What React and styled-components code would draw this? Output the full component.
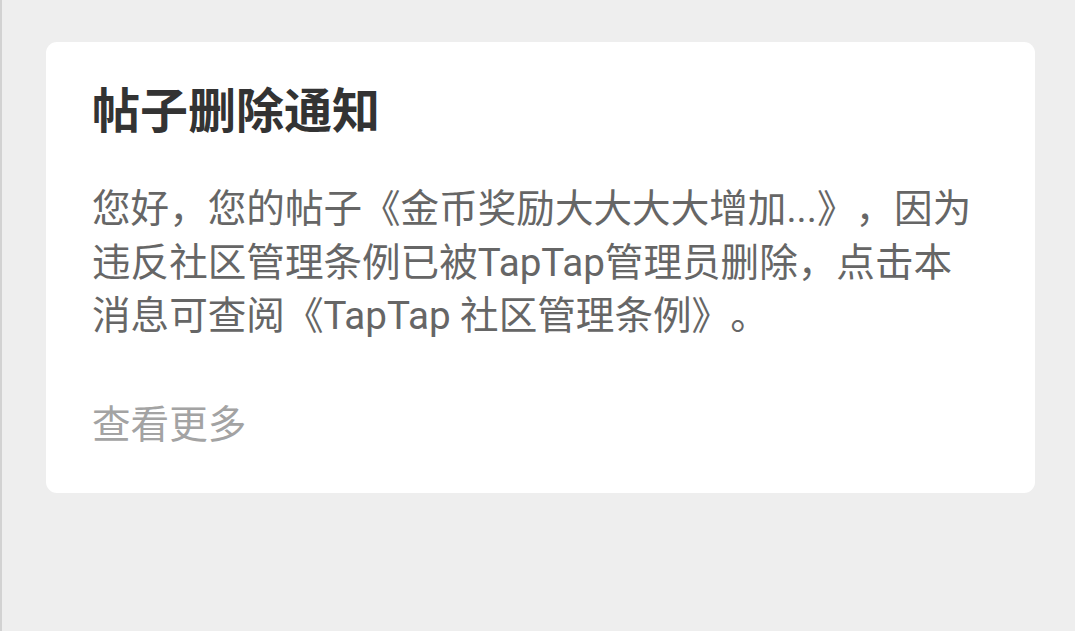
import React from 'react';
import styled, { createGlobalStyle } from 'styled-components';

const GlobalStyle = createGlobalStyle`
  html, body {
    margin: 0;
    padding: 0;
    background: #eeeeee;
  }
  body {
    font-family: Roboto, "Noto Sans CJK SC", sans-serif;
    text-spacing-trim: space-all;
  }
`

const Page = styled.div`
  min-height: 631px;
  box-sizing: border-box;
  border-left: 2px solid #d2d2d2;
  padding: 42px 40px 0 44px;
`

const Card = styled.div`
  background: #ffffff;
  border-radius: 11px;
  padding: 39px 46px 42px;
`

const Title = styled.h1`
  margin: 0;
  font-size: 48px;
  line-height: 62px;
  font-weight: 700;
  color: #333333;
`

const Body = styled.p`
  margin: 39px 0 0;
  font-size: 38.6px;
  line-height: 53.5px;
  color: #666666;
`

const More = styled.div`
  margin-top: 55px;
  font-size: 38.6px;
  line-height: 53px;
  color: #a3a3a3;
`

class App extends React.Component {
  render() {
    return (
      <Page lang="zh-CN">
        <GlobalStyle />
        <Card>
          <Title>帖子删除通知</Title>
          <Body>
            您好，您的帖子《金币奖励大大大大增加...》，因为违反社区管理条例已被TapTap管理员删除，点击本消息可查阅《TapTap 社区管理条例》。
          </Body>
          <More>查看更多</More>
        </Card>
      </Page>
    );
  }
}

export default App;
